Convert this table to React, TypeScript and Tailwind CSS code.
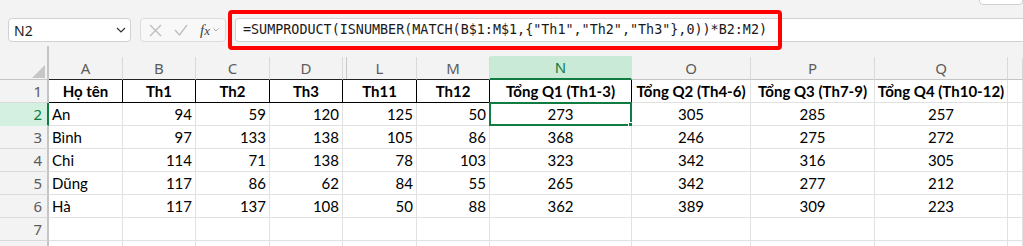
import React from "react";

const cols = [
  { key: "A", w: "w-[74px]" },
  { key: "B", w: "w-[73px]" },
  { key: "C", w: "w-[74px]" },
  { key: "D", w: "w-[73px]" },
  { key: "L", w: "w-[74px]" },
  { key: "M", w: "w-[73px]" },
  { key: "N", w: "w-[142px]" },
  { key: "O", w: "w-[119px]" },
  { key: "P", w: "w-[124px]" },
  { key: "Q", w: "w-[133px]" },
  { key: "", w: "flex-1" },
];

const heads = ["Họ tên", "Th1", "Th2", "Th3", "Th11", "Th12", "Tổng Q1 (Th1-3)", "Tổng Q2 (Th4-6)", "Tổng Q3 (Th7-9)", "Tổng Q4 (Th10-12)", ""];

const rows: (string | number)[][] = [
  ["An", 94, 59, 120, 125, 50, 273, 305, 285, 257],
  ["Bình", 97, 133, 138, 105, 86, 368, 246, 275, 272],
  ["Chi", 114, 71, 138, 78, 103, 323, 342, 316, 305],
  ["Dũng", 117, 86, 62, 84, 55, 265, 342, 277, 212],
  ["Hà", 117, 137, 108, 50, 88, 362, 389, 309, 223],
  ["", "", "", "", "", "", "", "", "", ""],
  ["", "", "", "", "", "", "", "", "", ""],
];

const cellFont = { fontFamily: "Lato, 'Noto Sans', sans-serif" };

const App = () => {
  return (
    <div className="w-[1023px] h-[246px] overflow-hidden bg-[#f3f3f3] relative" style={{ fontFamily: "'Noto Sans', sans-serif" }}>
      {/* top-right clipped box */}
      <div className="absolute right-0 top-[-20px] w-[44px] h-[25px] bg-white border border-[#d1d1d1] rounded-[4px]"></div>

      {/* formula bar */}
      <div className="h-[46px] flex items-start pt-[18px] pl-2 gap-[9px]">
        <div className="w-[123px] h-[24px] bg-white border border-[#d1d1d1] rounded-[4px] flex items-center justify-between pl-[5px] pr-[4px]">
          <span className="text-[14px] text-[#202020]">N2</span>
          <svg width="10" height="6" viewBox="0 0 10 6" fill="none" stroke="#333" strokeWidth="1.2">
            <path d="M1 1l4 4 4-4" />
          </svg>
        </div>
        <div className="w-[86px] h-[24px] bg-[#f8f8f8] border border-[#dcdcdc] rounded-[4px] flex items-center pl-[8px] gap-[12px]">
          <svg width="13" height="13" viewBox="0 0 13 13" stroke="#bdbdbd" strokeWidth="1.3">
            <path d="M1 1l11 11M12 1L1 12" />
          </svg>
          <svg width="14" height="12" viewBox="0 0 14 12" fill="none" stroke="#bdbdbd" strokeWidth="1.3">
            <path d="M1 6l4.5 5L13 1" />
          </svg>
          <div className="flex items-center gap-[3px]">
            <span className="text-[15px] italic text-[#444] leading-none" style={{ fontFamily: "'Liberation Serif', serif" }}>
              f<span className="text-[13px]">x</span>
            </span>
            <svg width="6" height="4" viewBox="0 0 6 4" fill="none" stroke="#aaa" strokeWidth="1">
              <path d="M0.5 0.5l2.5 2.5 2.5-2.5" />
            </svg>
          </div>
        </div>
        <div className="flex-1 h-[24px] bg-white border-y border-l border-[#d1d1d1] rounded-l-[4px] flex items-center pl-[7px]">
          <span className="text-[13.4px] text-[#1a1a1a] whitespace-nowrap" style={{ fontFamily: "'DejaVu Sans Mono', 'Liberation Mono', monospace" }}>
            =SUMPRODUCT(ISNUMBER(MATCH(B$1:M$1,{"{"}"Th1","Th2","Th3"{"}"},0))*B2:M2)
          </span>
        </div>
      </div>

      {/* red highlight */}
      <div className="absolute left-[228px] top-[10px] w-[554px] h-[40px] border-4 border-[#ff0000] rounded-[4px]"></div>

      {/* column header row */}
      <div className="flex h-[34px]">
        <div className="w-[49px] shrink-0 border-r-2 border-[#c4c4c4] relative">
          <div className="absolute right-[2px] bottom-[2px] w-0 h-0 border-l-[13px] border-l-transparent border-b-[13px] border-b-[#c6c6c6]"></div>
          <div className="absolute left-0 right-0 bottom-0 h-px bg-[#c4c4c4]"></div>
        </div>
        {cols.map((c, i) => {
          const sel = c.key === "N";
          const black = i < 6;
          return (
            <div key={i} className={`${c.w} shrink-0 flex flex-col`}>
              <div className="h-[12px]"></div>
              <div
                className={`flex-1 flex items-center justify-center text-[15px] border-r ${
                  sel
                    ? "bg-[#caead8] text-[#107c41] border-b-2 border-b-[#107c41] border-r-[#caead8]"
                    : black
                    ? "text-[#5c5c5c] border-b border-b-[#222] border-r-[#d9d9d9]"
                    : "text-[#5c5c5c] border-b border-b-[#c4c4c4] border-r-[#d9d9d9]"
                } ${c.key === "L" ? "shadow-[inset_3px_0_0_0_#f3f3f3,inset_4px_0_0_0_#c8c8c8]" : ""}`}
              >
                {c.key}
              </div>
            </div>
          );
        })}
      </div>

      {/* row 1 */}
      <div className="flex h-[23px]">
        <div className="w-[49px] shrink-0 border-r-2 border-[#c4c4c4] border-b border-b-[#d9d9d9] flex items-center justify-end pr-[5px] text-[15px] text-[#5c5c5c]">
          1
        </div>
        {cols.map((c, i) => (
          <div
            key={i}
            className={`${c.w} shrink-0 bg-white flex items-center justify-center text-[15px] font-bold text-black whitespace-nowrap border-r border-b ${
              i < 7 ? "border-black" : "border-[#e1e1e1]"
            }`}
            style={cellFont}
          >
            {heads[i]}
          </div>
        ))}
      </div>

      {/* data rows */}
      {rows.map((r, ri) => {
        const rowSel = ri === 0;
        const num = ri + 2;
        return (
          <div key={ri} className="flex h-[23px]">
            <div
              className={`w-[49px] shrink-0 border-r-2 border-b flex items-center justify-end pr-[5px] text-[15px] ${
                rowSel ? "bg-[#d3f0e0] text-[#107c41] border-r-[#107c41] border-b-[#d3f0e0]" : "text-[#5c5c5c] border-r-[#c4c4c4] border-b-[#d9d9d9]"
              }`}
            >
              {num < 8 ? num : ""}
            </div>
            {cols.map((c, i) => {
              const v = i < r.length ? r[i] : "";
              const align = i === 0 ? "justify-start pl-[3px]" : i < 6 ? "justify-end pr-[3px]" : "justify-center";
              return (
                <div
                  key={i}
                  className={`${c.w} shrink-0 bg-white relative flex items-center ${align} text-[15px] text-black border-r border-b border-[#e1e1e1]`}
                  style={cellFont}
                >
                  {v}
                  {i === 6 && rowSel && (
                    <>
                      <div className="absolute left-[-1px] top-[-1px] right-[-1px] bottom-[-1px] border-2 border-[#107c41]"></div>
                      <div className="absolute right-[-4px] bottom-[-4px] w-[7px] h-[7px] bg-[#107c41] border border-white"></div>
                    </>
                  )}
                </div>
              );
            })}
          </div>
        );
      })}
    </div>
  );
};

export default App;
